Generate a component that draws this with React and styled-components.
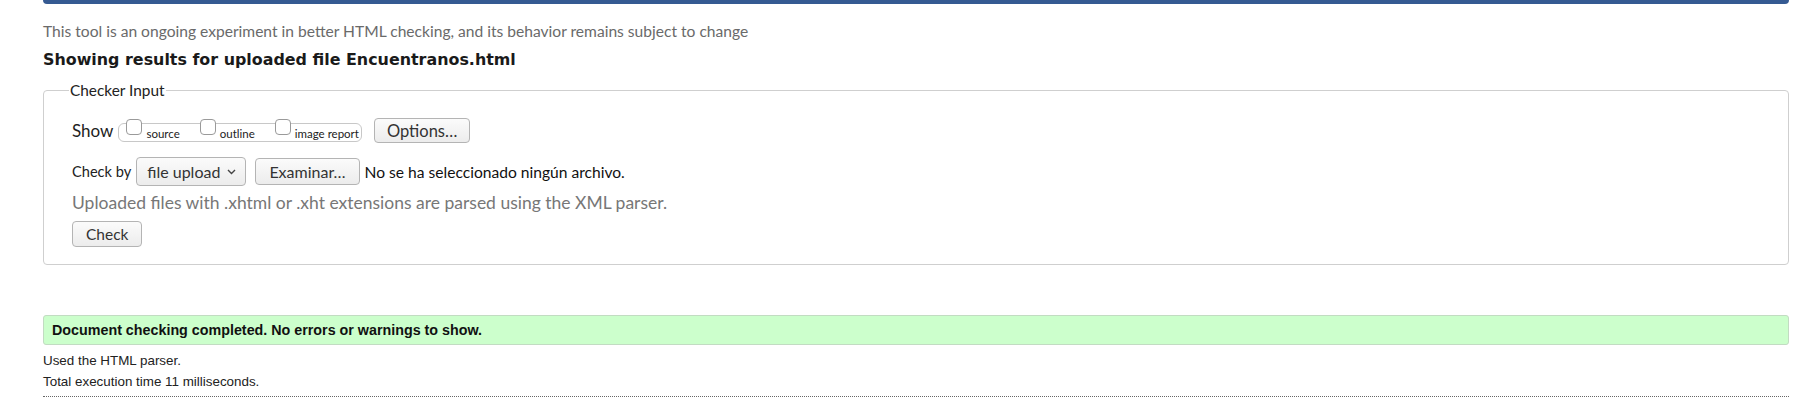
import React from "react";
import styled, { createGlobalStyle } from "styled-components";

const GlobalStyle = createGlobalStyle`
  body {
    margin: 0;
    background: #fff;
    font-family: "Lato", "Liberation Sans", sans-serif;
    color: #222;
  }
`;

const Page = styled.div`
  padding: 0 14px 0 43px;
`;

const TopBar = styled.div`
  height: 4px;
  background: #355a92;
  border-radius: 0 0 5px 5px;
`;

const Intro = styled.p`
  margin: 16px 0 0;
  font-size: 15.6px;
  line-height: 22px;
  color: #6a6a6a;
`;

const Heading = styled.h2`
  margin: 7px 0 0;
  font-family: "DejaVu Sans", "Liberation Sans", sans-serif;
  font-size: 15.9px;
  line-height: 22px;
  font-weight: 700;
  color: #1a1a1a;
`;

const Fieldset = styled.fieldset`
  margin: 10px 0 0;
  padding: 13px 28px 17px;
  border: 1px solid #cfcfcf;
  border-radius: 4px;
`;

const Legend = styled.legend`
  padding: 0 1px;
  margin-left: -3px;
  font-size: 15.4px;
  color: #222;
`;

const Row = styled.div`
  display: flex;
  align-items: center;
  gap: ${(p) => p.gap || 8}px;
  margin-top: ${(p) => p.top || 0}px;
`;

const Label = styled.span`
  font-size: ${(p) => p.size || 15}px;
  color: #222;
`;

const ShowGroup = styled.div`
  display: flex;
  align-items: flex-end;
  height: 17px;
  padding: 0 2px 0 7px;
  border: 1px solid #c8c8c8;
  border-radius: 6px;
  margin-top: 4px;
`;

const CheckItem = styled.label`
  display: flex;
  align-items: flex-end;
  margin-right: ${(p) => p.gap || 0}px;
`;

const Box = styled.span`
  width: 14px;
  height: 14px;
  border: 1px solid #9a9a9a;
  border-radius: 4px;
  background: #fff;
  margin-bottom: 6px;
`;

const CheckText = styled.span`
  font-size: 11.5px;
  line-height: 15px;
  margin-left: 4px;
  color: #222;
`;

const Button = styled.button`
  height: ${(p) => p.h || 25}px;
  padding: 0 ${(p) => p.pad || 11}px;
  border: 1px solid #b4b4b4;
  border-radius: 4px;
  background: linear-gradient(#fbfbfb, #ececec);
  font-family: "Lato", "Liberation Sans", sans-serif;
  font-size: ${(p) => p.size || 15}px;
  color: #333;
`;

const Select = styled.div`
  display: flex;
  align-items: center;
  gap: 7px;
  height: 27px;
  padding: 0 9px 0 10px;
  border: 1px solid #b4b4b4;
  border-radius: 4px;
  background: linear-gradient(#fbfbfb, #ececec);
  font-size: 16px;
  color: #333;
`;

const FileName = styled.span`
  font-size: 15.6px;
  color: #111;
`;

const Hint = styled.p`
  margin: 6px 0 0;
  font-size: 17.5px;
  line-height: 21px;
  color: #777;
`;

const Success = styled.div`
  margin-top: 50px;
  height: 28px;
  display: flex;
  align-items: center;
  padding: 0 8px;
  background: #ccffcc;
  border: 1px solid #c2dcc2;
  border-radius: 3px;
  font-family: "Liberation Sans", Arial, sans-serif;
  font-weight: 700;
  font-size: 14.3px;
  color: #111;
`;

const Detail = styled.p`
  margin: ${(p) => p.top || 0}px 0 0;
  font-family: "Liberation Sans", Arial, sans-serif;
  font-size: 13.4px;
  line-height: 21px;
  color: #222;
`;

const Rule = styled.hr`
  margin: 4px 0 0;
  border: 0;
  border-top: 1px dotted #666;
`;

const Chevron = () => (
  <svg width="9" height="6" viewBox="0 0 9 6">
    <path d="M1 1l3.5 3.5L8 1" fill="none" stroke="#444" strokeWidth="1.4" />
  </svg>
);

export default function App() {
  return (
    <>
      <GlobalStyle />
      <Page>
        <TopBar />
        <Intro>
          This tool is an ongoing experiment in better HTML checking, and its behavior remains subject to change
        </Intro>
        <Heading>Showing results for uploaded file Encuentranos.html</Heading>
        <Fieldset>
          <Legend>Checker Input</Legend>
          <Row gap={5} top={6}>
            <Label size={17}>Show</Label>
            <ShowGroup>
              <CheckItem gap={20}>
                <Box />
                <CheckText>source</CheckText>
              </CheckItem>
              <CheckItem gap={20}>
                <Box />
                <CheckText>outline</CheckText>
              </CheckItem>
              <CheckItem>
                <Box />
                <CheckText>image report</CheckText>
              </CheckItem>
            </ShowGroup>
            <Button h={25} pad={12} size={16.5} style={{ marginLeft: 7 }}>
              Options…
            </Button>
          </Row>
          <Row gap={5} top={14}>
            <Label size={14.6}>Check by</Label>
            <Select>
              file upload <Chevron />
            </Select>
            <Button h={27} pad={13} size={16} style={{ marginLeft: 4 }}>
              Examinar…
            </Button>
            <FileName>No se ha seleccionado ningún archivo.</FileName>
          </Row>
          <Hint>Uploaded files with .xhtml or .xht extensions are parsed using the XML parser.</Hint>
          <Row top={8}>
            <Button h={26} pad={13} size={15.5}>
              Check
            </Button>
          </Row>
        </Fieldset>
        <Success>Document checking completed. No errors or warnings to show.</Success>
        <Detail top={5}>Used the HTML parser.</Detail>
        <Detail>Total execution time 11 milliseconds.</Detail>
        <Rule />
      </Page>
    </>
  );
}
